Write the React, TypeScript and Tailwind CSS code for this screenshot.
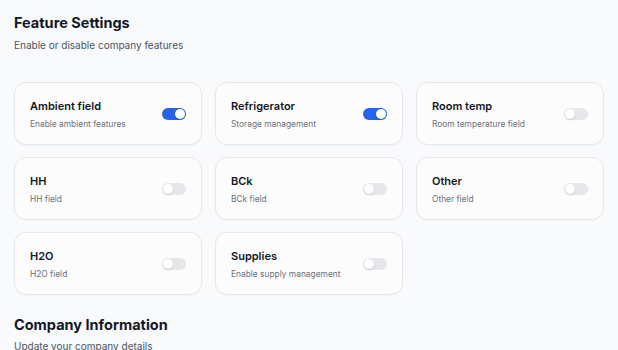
const features = [
	{ title: "Ambient field", desc: "Enable ambient features", on: true },
	{ title: "Refrigerator", desc: "Storage management", on: true },
	{ title: "Room temp", desc: "Room temperature field", on: false },
	{ title: "HH", desc: "HH field", on: false },
	{ title: "BCk", desc: "BCk field", on: false },
	{ title: "Other", desc: "Other field", on: false },
	{ title: "H2O", desc: "H2O field", on: false },
	{ title: "Supplies", desc: "Enable supply management", on: false },
];

const Toggle = ({ on }: { on: boolean }) => {
	return (
		<div
			className={
				on
					? "w-6 h-3 rounded-full bg-[#2563eb] flex items-center justify-end px-[1px]"
					: "w-6 h-3 rounded-full bg-[#e5e7eb] flex items-center justify-start px-[1px]"
			}
		>
			<div className="w-[10px] h-[10px] rounded-full bg-white shadow-[0_1px_2px_rgba(0,0,0,0.15)]" />
		</div>
	);
};

const App = () => {
	return (
		<div className="w-[618px] h-[350px] overflow-hidden bg-[#f9fafc] font-['Inter',sans-serif] px-[14px] pt-[13px]">
			<h2 className="text-[14.5px] leading-5 font-bold text-[#111827]">Feature Settings</h2>
			<p className="text-[10px] leading-4 mt-[4px] text-[#4b5563]">Enable or disable company features</p>

			<div className="grid grid-cols-3 gap-x-[13px] gap-y-3 mt-[29px] w-[590px]">
				{features.map((f) => (
					<div
						key={f.title}
						className="h-[63px] rounded-xl border border-[#e5e7eb] bg-[#fcfcfd] shadow-[0_1px_2px_rgba(0,0,0,0.03)] px-[15px] flex items-center justify-between"
					>
						<div className="flex flex-col">
							<span className="text-[11px] leading-4 font-semibold text-[#111827]">{f.title}</span>
							<span className="text-[8.4px] leading-3 mt-[4px] text-[#6b7280]">{f.desc}</span>
						</div>
						<Toggle on={f.on} />
					</div>
				))}
			</div>

			<h2 className="text-[14.5px] leading-5 font-bold text-[#111827] mt-[20px]">Company Information</h2>
			<p className="text-[10px] leading-4 mt-[3px] text-[#4b5563]">Update your company details</p>
		</div>
	);
};

export default App;
